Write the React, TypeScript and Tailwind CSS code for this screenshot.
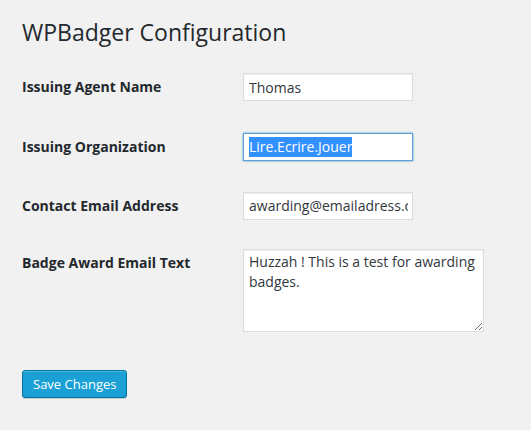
import React from "react";

const font = { fontFamily: '"Open Sans", "Noto Sans", sans-serif' };

function Row({ label, children, cls }: { label: string; children: React.ReactNode; cls?: string }) {
  return (
    <div className={"flex " + (cls ?? "")}>
      <div className="w-[220px] shrink-0 pt-[21px] pb-[19px] text-[14px] leading-[18px] font-bold text-[#23282d]">
        {label}
      </div>
      <div className="py-[15px]">{children}</div>
    </div>
  );
}

export default function App() {
  return (
    <div className="min-h-[430px] w-[531px] bg-[#f1f1f1] pl-[22px] pt-[18px]" style={font}>
      <h2 className="text-[23px] leading-[29px] font-normal text-[#23282d]">WPBadger Configuration</h2>
      <div className="mt-[10px]">
        <Row label="Issuing Agent Name">
          <input
            readOnly
            defaultValue="Thomas"
            className="m-[1px] h-[28px] w-[170px] border border-[#ddd] bg-white px-[5px] text-[14px] text-[#32373c] shadow-[inset_0_1px_2px_rgba(0,0,0,0.07)] outline-none"
            style={font}
          />
        </Row>
        <Row label="Issuing Organization">
          <div className="m-[1px] flex h-[28px] w-[170px] items-center border border-[#5b9dd9] bg-white px-[5px] text-[14px] shadow-[0_0_2px_rgba(30,140,190,0.8)]">
            <span className="bg-[#3390ff] leading-[20px] text-white">Lire.Ecrire.Jouer</span>
          </div>
        </Row>
        <Row label="Contact Email Address" cls="-mt-[1px]">
          <div className="m-[1px] h-[28px] w-[170px] overflow-hidden border border-[#ddd] bg-white pl-[5px] pr-[4px] text-[14px] leading-[26px] text-[#32373c] shadow-[inset_0_1px_2px_rgba(0,0,0,0.07)]">
            <div className="overflow-hidden whitespace-nowrap">awarding@emailadress.c</div>
          </div>
        </Row>
        <Row label="Badge Award Email Text" cls="-mt-[3px]">
          <textarea
            readOnly
            defaultValue="Huzzah ! This is a test for awarding badges."
            className="m-[1px] block h-[83px] w-[241px] resize border border-[#ddd] bg-white px-[5px] py-[2px] text-[14px] leading-[20px] text-[#32373c] shadow-[inset_0_1px_2px_rgba(0,0,0,0.07)] outline-none"
            style={font}
          />
        </Row>
      </div>
      <div className="pt-[22px]">
        <button
          className="h-[28px] rounded-[3px] border border-[#0074a2] bg-[#1ba0d6] px-[10px] pb-[1px] text-[13px] leading-[26px] text-white shadow-[inset_0_1px_0_rgba(120,200,230,0.5),0_1px_0_rgba(0,0,0,0.15)]"
          style={font}
        >
          Save Changes
        </button>
      </div>
    </div>
  );
}
